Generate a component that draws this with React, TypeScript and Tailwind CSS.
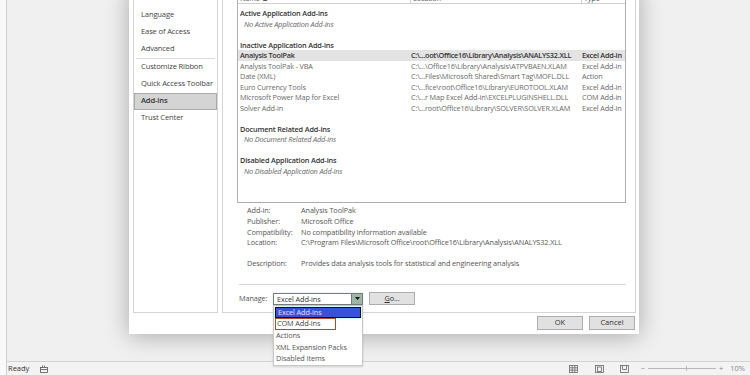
import type { ReactNode } from "react";

const navItems = [
  "Save",
  "Language",
  "Ease of Access",
  "Advanced",
  "|",
  "Customize Ribbon",
  "Quick Access Toolbar",
  "Add-ins",
  "Trust Center",
];

type Row =
  | { kind: "head"; text: string }
  | { kind: "none"; text: string }
  | { kind: "gap" }
  | { kind: "item"; name: string; location: string; type: string; selected?: boolean };

const rows: Row[] = [
  { kind: "head", text: "Active Application Add-ins" },
  { kind: "none", text: "No Active Application Add-ins" },
  { kind: "gap" },
  { kind: "head", text: "Inactive Application Add-ins" },
  {
    kind: "item",
    name: "Analysis ToolPak",
    location: "C:\\...oot\\Office16\\Library\\Analysis\\ANALYS32.XLL",
    type: "Excel Add-in",
    selected: true,
  },
  {
    kind: "item",
    name: "Analysis ToolPak - VBA",
    location: "C:\\...\\Office16\\Library\\Analysis\\ATPVBAEN.XLAM",
    type: "Excel Add-in",
  },
  {
    kind: "item",
    name: "Date (XML)",
    location: "C:\\...Files\\Microsoft Shared\\Smart Tag\\MOFL.DLL",
    type: "Action",
  },
  {
    kind: "item",
    name: "Euro Currency Tools",
    location: "C:\\...fice\\root\\Office16\\Library\\EUROTOOL.XLAM",
    type: "Excel Add-in",
  },
  {
    kind: "item",
    name: "Microsoft Power Map for Excel",
    location: "C:\\...r Map Excel Add-in\\EXCELPLUGINSHELL.DLL",
    type: "COM Add-in",
  },
  {
    kind: "item",
    name: "Solver Add-in",
    location: "C:\\...root\\Office16\\Library\\SOLVER\\SOLVER.XLAM",
    type: "Excel Add-in",
  },
  { kind: "gap" },
  { kind: "head", text: "Document Related Add-ins" },
  { kind: "none", text: "No Document Related Add-ins" },
  { kind: "gap" },
  { kind: "head", text: "Disabled Application Add-ins" },
  { kind: "none", text: "No Disabled Application Add-ins" },
];

const details: [string, string][] = [
  ["Add-in:", "Analysis ToolPak"],
  ["Publisher:", "Microsoft Office"],
  ["Compatibility:", "No compatibility information available"],
  ["Location:", "C:\\Program Files\\Microsoft Office\\root\\Office16\\Library\\Analysis\\ANALYS32.XLL"],
  ["", ""],
  ["Description:", "Provides data analysis tools for statistical and engineering analysis"],
];

function AddinRow({ row }: { row: Row }) {
  if (row.kind === "gap") return <div className="h-[10.5px]" />;
  if (row.kind === "head")
    return (
      <div className="h-[10.5px] whitespace-nowrap pl-[2px] font-semibold leading-[10.5px] text-[#333]">{row.text}</div>
    );
  if (row.kind === "none")
    return <div className="h-[10.5px] whitespace-nowrap pl-[6px] italic leading-[10.5px] text-[#666]">{row.text}</div>;
  return (
    <div
      className={
        row.selected
          ? "flex h-[10.5px] whitespace-nowrap bg-[#e3e3e3] font-semibold leading-[10.5px] tracking-[-0.25px] text-[#333]"
          : "flex h-[10.5px] whitespace-nowrap leading-[10.5px] text-[#6a6a6a]"
      }
    >
      <span className="w-[173px] shrink-0 pl-[2px]">{row.name}</span>
      <span className="w-[171px] shrink-0">{row.location}</span>
      <span>{row.type}</span>
    </div>
  );
}

function DialogButton({ children, className }: { children: ReactNode; className: string }) {
  return (
    <button
      type="button"
      className={`flex h-[14px] items-center justify-center border border-[#adadad] bg-[#e1e1e1] text-[7.5px] text-[#333] ${className}`}
    >
      {children}
    </button>
  );
}

function ManageRow() {
  return (
    <div className="ml-[2px] mt-[7px] flex h-[13px] items-center">
      <span className="w-[34px] text-[#555]">Manage:</span>
      <div className="relative">
        <div className="flex h-[12px] w-[90px] items-center border border-[#7a7a7a] bg-white shadow-[0_0_2px_#bfeff0]">
          <span className="flex-1 pl-[3px] leading-[10px] text-[#333]">Excel Add-ins</span>
          <span className="flex h-full w-[11px] items-center justify-center border-l border-[#7a7a7a] bg-[#9fb6a7]">
            <svg width="5" height="3" viewBox="0 0 5 3">
              <path d="M0 0h5L2.5 3z" fill="#111" />
            </svg>
          </span>
        </div>
        <div className="absolute left-0 top-[12px] z-20 w-[90px] border border-[#c8c8c8] bg-white pt-[1px] text-[#555] shadow-[0_1px_2px_rgba(0,0,0,0.15)]">
          <div className="mx-[1px] flex h-[11px] items-center border border-[#111] bg-[#3d4fd8] pl-[2px] text-[#e8e0ff] shadow-[0_0_2px_#7fe8e8]">
            Excel Add-ins
          </div>
          <div className="ml-[1px] flex h-[12px] w-[61px] items-center border-[1.5px] border-[#a55028] pl-[1px] text-[#444]">
            COM Add-ins
          </div>
          <div className="flex h-[11.7px] items-center pl-[2px]">Actions</div>
          <div className="flex h-[11.7px] items-center pl-[2px]">XML Expansion Packs</div>
          <div className="flex h-[11.7px] items-center pl-[2px]">Disabled Items</div>
        </div>
      </div>
      <button
        type="button"
        className="ml-[6px] flex h-[13px] w-[46px] items-center justify-center border border-[#adadad] bg-[#e1e1e1] text-[#333]"
      >
        <span className="underline">G</span>o...
      </button>
    </div>
  );
}

function OptionsDialog() {
  return (
    <div className="relative z-10 -mt-[12px] ml-[122px] flex h-[346px] w-[510px] flex-col bg-white pl-[4px] pr-[3px] pb-[4px] shadow-[0_2px_22px_rgba(0,0,0,0.3)]">
      <div className="flex h-[325px]">
        <nav className="w-[85px] border border-[#d5d5d5] pt-[0.5px] text-[7.6px] tracking-[-0.15px] text-[#444]">
          {navItems.map((item, i) =>
            item === "|" ? (
              <div key={i} className="mx-[2px] h-px bg-[#dcdcdc]" />
            ) : (
              <div
                key={item}
                className={
                  item === "Add-ins"
                    ? "flex h-[17px] items-center whitespace-nowrap border border-[#a9a9a9] bg-[#d4d4d4] pl-[6px] font-semibold text-[#333]"
                    : "flex h-[17px] items-center whitespace-nowrap pl-[7px]"
                }
              >
                {item}
              </div>
            ),
          )}
        </nav>

        <section className="ml-[4px] flex w-[414px] flex-col border border-[#d5d5d5] pl-[14px] pr-[9px] text-[7.3px] tracking-[-0.1px]">
          <div className="mt-[1px] h-[213px] border border-[#adadad] tracking-[-0.15px]">
            <div className="flex h-[13px] items-end border-b border-[#d0d0d0] text-[#555]">
              <span className="w-[173px] border-r border-[#d0d0d0] pl-[2px] leading-[9px]">Name ▲</span>
              <span className="w-[171px] border-r border-[#d0d0d0] pl-[2px] leading-[9px]">Location</span>
              <span className="pl-[2px] leading-[9px]">Type</span>
            </div>
            <div className="pt-[4px]">
              {rows.map((row, i) => (
                <AddinRow key={i} row={row} />
              ))}
            </div>
          </div>

          <div className="mt-[2.5px] pl-[10px] text-[#555]">
            {details.map(([label, value], i) => (
              <div key={i} className="flex h-[10.6px] items-center whitespace-nowrap">
                <span className="w-[54px] shrink-0">{label}</span>
                <span>{value}</span>
              </div>
            ))}
          </div>

          <div className="ml-[2px] mt-[15px] h-px bg-[#d5d5d5]" />
          <ManageRow />
        </section>
      </div>

      <div className="mt-[3px] flex justify-end gap-[6px] pr-[1px]">
        <DialogButton className="w-[46px]">OK</DialogButton>
        <DialogButton className="w-[46px]">Cancel</DialogButton>
      </div>
    </div>
  );
}

function StatusBar() {
  return (
    <footer className="relative z-0 flex h-[14px] items-center border-t border-[#d2d2d2] bg-[#f3f3f3] text-[7.5px] text-[#333]">
      <span className="pl-[1px]">Ready</span>
      <svg className="ml-[11px]" width="8" height="8" viewBox="0 0 8 8" fill="none" stroke="#555" strokeWidth="0.8">
        <rect x="0.5" y="2.5" width="7" height="5" />
        <path d="M0.5 4.5h7M2.5 0.5v2M4.5 0.5v2" />
      </svg>
      <div className="ml-auto flex items-center">
        <svg width="9" height="8" viewBox="0 0 9 8" fill="none" stroke="#666" strokeWidth="0.8">
          <rect x="0.5" y="0.5" width="8" height="7" />
          <path d="M3.2 0.5v7M5.8 0.5v7M0.5 2.8h8M0.5 5.2h8" />
        </svg>
        <svg className="ml-[17px]" width="9" height="8" viewBox="0 0 9 8" fill="none" stroke="#666" strokeWidth="0.8">
          <rect x="0.5" y="0.5" width="8" height="7" />
          <rect x="2.5" y="2" width="4" height="4.5" />
        </svg>
        <svg className="ml-[16px]" width="9" height="8" viewBox="0 0 9 8" fill="none" stroke="#666" strokeWidth="0.8">
          <rect x="0.5" y="0.5" width="8" height="7" />
          <path d="M2.5 0.5v4h4v-4" />
        </svg>
        <span className="ml-[12px] text-[#888]">−</span>
        <div className="relative mx-[3px] h-px w-[68px] bg-[#b8b8b8]">
          <div className="absolute left-[38px] top-[-2px] h-[5px] w-px bg-[#b8b8b8]" />
        </div>
        <span className="text-[#888]">+</span>
        <span className="ml-[7px] mr-[5px] text-[#888]">10%</span>
      </div>
    </footer>
  );
}

export default function App() {
  return (
    <div className="flex h-[375px] w-[750px] overflow-hidden bg-[#f0f0f0] font-['Open_Sans',sans-serif]">
      <div className="w-[7px] shrink-0 border-r border-[#d0d0d0] bg-[#f9f9f9]" />
      <div className="flex min-w-0 flex-1 flex-col">
        <main className="relative z-10 flex-1">
          <OptionsDialog />
        </main>
        <StatusBar />
      </div>
    </div>
  );
}
